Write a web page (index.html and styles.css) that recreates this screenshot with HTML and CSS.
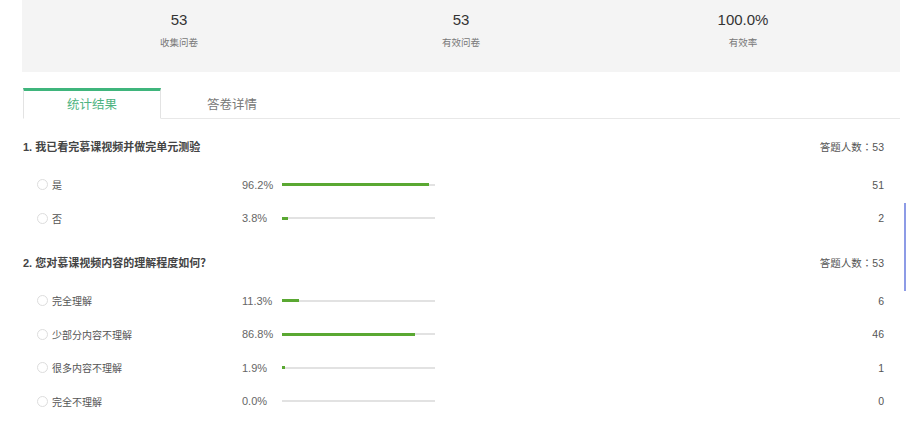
FILE: index.html
```html
<!DOCTYPE html>
<html lang="zh-CN">
<head>
    <meta charset="UTF-8">
    <title>统计结果</title>
    <link rel="stylesheet" href="styles.css">
</head>
<body>
    <div class="page">
        <div class="summary">
            <div class="summary-item">
                <div class="summary-num">53</div>
                <div class="summary-label">收集问卷</div>
            </div>
            <div class="summary-item">
                <div class="summary-num">53</div>
                <div class="summary-label">有效问卷</div>
            </div>
            <div class="summary-item">
                <div class="summary-num">100.0%</div>
                <div class="summary-label">有效率</div>
            </div>
        </div>

        <div class="tabs">
            <div class="tab tab-active">统计结果</div>
            <div class="tab">答卷详情</div>
            <div class="tab-rest"></div>
        </div>

        <div class="question">
            <div class="question-head">
                <span class="question-title">1. 我已看完慕课视频并做完单元测验</span>
                <span class="question-count" lang="zh-TW">答题人数：53</span>
            </div>
            <div class="option">
                <span class="option-label"><i class="radio"></i>是</span>
                <span class="option-pct">96.2%</span>
                <span class="bar"><span class="bar-fill" style="width: 96.2%"></span></span>
                <span class="option-num">51</span>
            </div>
            <div class="option">
                <span class="option-label"><i class="radio"></i>否</span>
                <span class="option-pct">3.8%</span>
                <span class="bar"><span class="bar-fill" style="width: 3.8%"></span></span>
                <span class="option-num">2</span>
            </div>
        </div>

        <div class="question">
            <div class="question-head">
                <span class="question-title">2. 您对慕课视频内容的理解程度如何？</span>
                <span class="question-count" lang="zh-TW">答题人数：53</span>
            </div>
            <div class="option">
                <span class="option-label"><i class="radio"></i>完全理解</span>
                <span class="option-pct">11.3%</span>
                <span class="bar"><span class="bar-fill" style="width: 11.3%"></span></span>
                <span class="option-num">6</span>
            </div>
            <div class="option">
                <span class="option-label"><i class="radio"></i>少部分内容不理解</span>
                <span class="option-pct">86.8%</span>
                <span class="bar"><span class="bar-fill" style="width: 86.8%"></span></span>
                <span class="option-num">46</span>
            </div>
            <div class="option">
                <span class="option-label"><i class="radio"></i>很多内容不理解</span>
                <span class="option-pct">1.9%</span>
                <span class="bar"><span class="bar-fill" style="width: 1.9%"></span></span>
                <span class="option-num">1</span>
            </div>
            <div class="option">
                <span class="option-label"><i class="radio"></i>完全不理解</span>
                <span class="option-pct">0.0%</span>
                <span class="bar"><span class="bar-fill" style="width: 0%"></span></span>
                <span class="option-num">0</span>
            </div>
        </div>
    </div>
    <div class="scroll-mark"></div>
</body>
</html>
```

FILE: styles.css
```css
body {
    margin: 0;
    background: #fff;
    color: #555;
    font-family: "Liberation Sans", "Noto Sans CJK SC", sans-serif;
    overflow: hidden;
}

.page {
    width: 878px;
    margin-left: 22px;
}

/* top summary */
.summary {
    display: grid;
    grid-template-columns: repeat(3, 1fr);
    height: 72px;
    padding: 0 16px;
    background: #f4f4f4;
}

.summary-item {
    text-align: center;
    padding-top: 10px;
}

.summary-num {
    font-size: 15px;
    line-height: 20px;
    color: #333;
}

.summary-label {
    margin-top: 7px;
    font-size: 9.5px;
    line-height: 12px;
    color: #777;
}

/* tabs */
.tabs {
    display: flex;
    margin-top: 16px;
    height: 31px;
}

.tab {
    width: 138px;
    font-size: 12.5px;
    line-height: 28px;
    text-align: center;
    color: #777;
    border-top: 3px solid transparent;
    border-bottom: 1px solid #e8e8e8;
    box-sizing: border-box;
}

.tab-active {
    margin-left: 1px;
    color: #4db380;
    border-top-color: #3fb57c;
    border-left: 1px solid #e3e3e3;
    border-right: 1px solid #e3e3e3;
    border-bottom-color: #fff;
}

.tab + .tab {
    width: 142px;
}

.tab-rest {
    flex: 1;
    border-bottom: 1px solid #e8e8e8;
}

/* questions */
.question {
    margin-top: 18px;
    padding-right: 16px;
}

.question-head {
    display: flex;
    justify-content: space-between;
    height: 20px;
    line-height: 20px;
    margin-bottom: 11px;
    padding-left: 1px;
}

.question-title {
    font-size: 11px;
    color: #444;
    font-weight: bold;
}

/* TC face centres the full-width colon */
.question-count {
    font-family: "Liberation Sans", "Noto Sans CJK TC", sans-serif;
    font-size: 10.5px;
    color: #555;
}

.option {
    display: grid;
    grid-template-columns: 205px 40px 153px 1fr;
    align-items: center;
    height: 33.5px;
    padding-left: 15px;
    font-size: 10px;
}

.option-label {
    display: flex;
    align-items: center;
    color: #555;
}

.radio {
    width: 9px;
    height: 9px;
    margin-right: 4px;
    border: 1px solid #ddd;
    border-radius: 50%;
}

.option-pct {
    font-size: 11px;
    color: #666;
}

.bar {
    height: 2px;
    background: #e2e2e2;
    display: flex;
    align-items: center;
}

.bar-fill {
    height: 3px;
    background: #5aa832;
}

.option-num {
    text-align: right;
    font-size: 10.5px;
    color: #555;
}

.scroll-mark {
    position: absolute;
    top: 203px;
    right: 1px;
    width: 2px;
    height: 88px;
    background: #8d9be6;
}
```
